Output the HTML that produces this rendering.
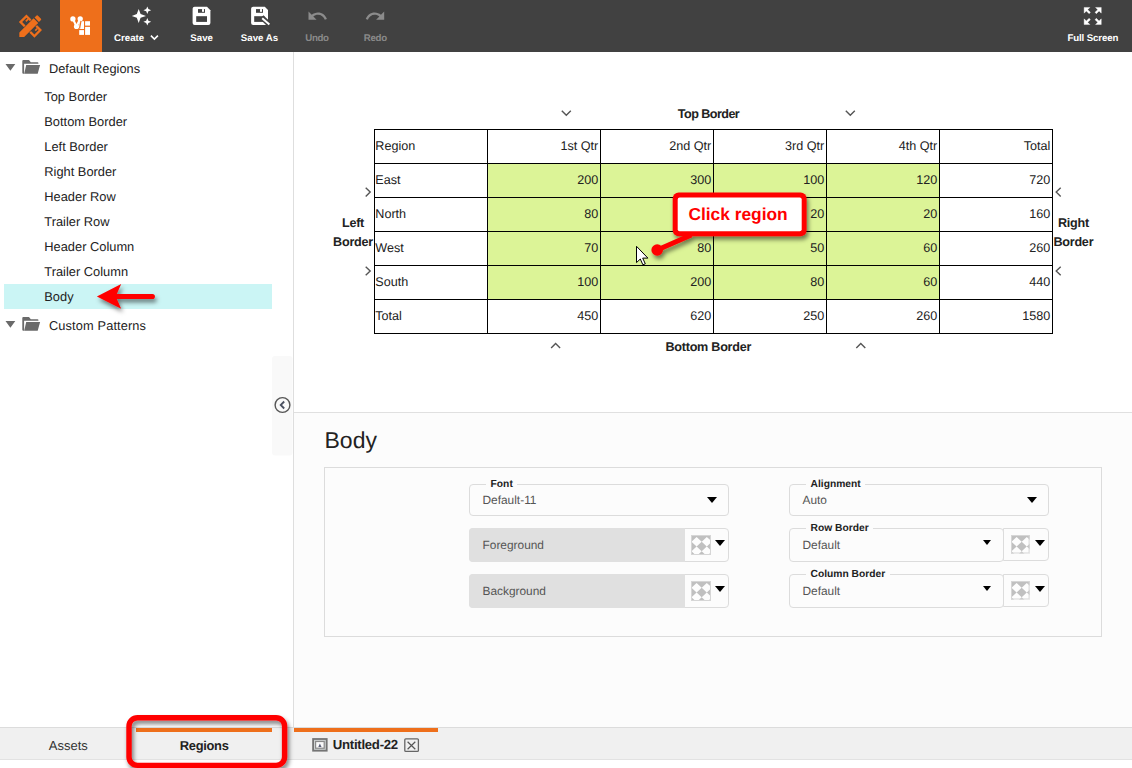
<!DOCTYPE html>
<html lang="en">
<head>
<meta charset="utf-8">
<title>Regions</title>
<style>
*{box-sizing:border-box;margin:0;padding:0}
html,body{width:1132px;height:768px;overflow:hidden;background:#fff;font-family:"Liberation Sans",sans-serif;color:#222;text-rendering:geometricPrecision}
.abs{position:absolute}
#app{position:relative;width:1132px;height:768px;overflow:hidden;background:#fff}
/* toolbar */
#tb{position:absolute;left:0;top:0;width:1132px;height:52px;background:#414141}
#tb .act{position:absolute;left:60px;top:0;width:42px;height:52px;background:#ee6f1b}
.tbl{position:absolute;top:31.5px;height:13px;line-height:13px;font-size:9.7px;font-weight:bold;color:#fff;white-space:nowrap}
.tbl.dis{color:#8a8a8a}
.tbi{position:absolute}
/* left panel */
#lp{position:absolute;left:0;top:52px;width:293px;height:675px;background:#fff}
#lpb{position:absolute;left:293px;top:52px;width:1px;height:675px;background:#dedede}
.tr{position:absolute;left:0;height:25px;line-height:25px;font-size:12.6px;color:#222;white-space:nowrap}
.tr.it{left:44.3px;font-size:12.85px}
.tr.fo{left:49px;font-size:12.8px}
#sel{position:absolute;left:4px;top:284px;width:268px;height:25px;background:#cbf5f5}
.tri{position:absolute;width:0;height:0;border-left:4.9px solid transparent;border-right:4.9px solid transparent;border-top:6.7px solid #6a6a6a}
/* bottom tabs */
#bt{position:absolute;left:0;top:727px;width:1132px;height:33px;background:#f0f0f0;border-top:1px solid #dcdcdc;border-bottom:1px solid #e2e2e2}
.ol{position:absolute;top:728px;height:4px;background:#ee6f1b}
/* table */
#grid{position:absolute;left:374px;top:129px;border-collapse:collapse;table-layout:fixed;font-size:12.6px;color:#222}
#grid td{border:1px solid #000;width:113px;height:34px;padding:0 1.7px 1px 0.3px;text-align:right;vertical-align:middle;white-space:nowrap;overflow:hidden}
#grid td:first-child{text-align:left}
#grid td.g{background:#dcf497}
.bl{position:absolute;font-size:12.6px;letter-spacing:-0.25px;font-weight:bold;color:#222;white-space:nowrap;text-align:center;line-height:19px;transform:translateX(-50%)}
/* props */
#pp{position:absolute;left:294px;top:412px;width:838px;height:315px;background:#fcfcfc;border-top:1px solid #e0e0e0}
#fs{position:absolute;left:324px;top:467px;width:778px;height:170px;border:1px solid #dcdcdc}
.sel{position:absolute;border:1px solid #dcdcdc;border-radius:4px;background:#fcfcfc}
.lab{position:absolute;font-size:10.25px;font-weight:bold;color:#222;background:#fcfcfc;border-radius:3px;padding:0 4.5px;height:13px;line-height:13px;white-space:nowrap;margin:1.3px 0 0 2.1px}
.val{position:absolute;font-size:11.9px;margin:-0.4px 0 0 0.5px;color:#555;white-space:nowrap;height:16px;line-height:16px}
.dn{position:absolute;width:0;height:0;border-left:5px solid transparent;border-right:5px solid transparent;border-top:6px solid #000}
.dn.s{border-left-width:4px;border-right-width:4px;border-top-width:5px}
.gry{position:absolute;background:#e0e0e0;border-radius:4px 0 0 4px}
.sw{position:absolute;width:20px;height:20px}
</style>
</head>
<body>
<div id="app">

<!-- TOOLBAR -->
<div id="tb">
  <div class="act"></div>
  <svg class="tbi" style="left:0;top:0" width="1132" height="52" viewBox="0 0 1132 52">
    <!-- design icon -->
    <g transform="translate(30.44,26.08) rotate(45)" fill="#ee6f1b">
      <path fill-rule="evenodd" d="M-11 -5.35 H11 V5.35 H-11Z M-8.7 -3.05 H8.7 V3.05 H-8.7Z"/>
      <rect x="-7.4" y="-3.2" width="1.7" height="3.1"/>
      <rect x="5.8" y="-3.2" width="1.7" height="3.1"/>
    </g>
    <g transform="translate(30.44,26.08) rotate(-45)" fill="#ee6f1b">
      <path d="M-15.4 0 L-12.3 -3.1 H7.55 V3.1 H-12.3Z" stroke="#414141" stroke-width="1.6" paint-order="stroke"/>
      <path d="M-15.4 0 L-12.3 -3.1 H7.55 V3.1 H-12.3Z"/>
      <path d="M8.9 -3.1 H11.8 a0.8 0.8 0 0 1 0.8 0.8 V2.3 a0.8 0.8 0 0 1 -0.8 0.8 H8.9Z"/>
    </g>
    <!-- regions icon -->
    <g fill="#fff" stroke="none">
      <circle cx="72.9" cy="18.9" r="2.65"/><circle cx="80.2" cy="18.8" r="2.65"/><circle cx="76.5" cy="26.5" r="2.6"/>
      <path d="M72.9 18.9 L76.5 26.5 L80.2 18.8" fill="none" stroke="#fff" stroke-width="2.1" stroke-linejoin="round"/>
      <rect x="79.2" y="21.2" width="4.8" height="7.8"/>
      <rect x="85.1" y="21.2" width="4.9" height="4.4"/>
      <rect x="79.2" y="30.1" width="4.8" height="4.8"/>
      <rect x="85.1" y="26.9" width="4.9" height="8"/>
    </g>
    <path d="M81 20.9 L79.55 28.6" fill="none" stroke="#ee6f1b" stroke-width="1.15"/>
    <!-- create sparkle -->
    <g fill="#fff">
      <path d="M138.7 9 L140.6 14 L146 15.9 L140.6 17.8 L138.7 22.9 L136.8 17.8 L131.8 15.9 L136.8 14Z"/>
      <path d="M147.3 6.4 L148.4 9.1 L151.2 10.2 L148.4 11.3 L147.3 14 L146.2 11.3 L143.4 10.2 L146.2 9.1Z"/>
      <path d="M147.3 18 L148.4 20.7 L151.2 21.8 L148.4 22.9 L147.3 25.6 L146.2 22.9 L143.4 21.8 L146.2 20.7Z"/>
    </g>
    <path d="M150.9 35.6 L154.4 39.1 L157.9 35.6" fill="none" stroke="#fff" stroke-width="1.6"/>
    <!-- save -->
    <g id="flop">
      <path fill="#fff" d="M194.6 6.8 H207 L210.4 10.2 V23.1 a2 2 0 0 1 -2 2 H194.6 a2 2 0 0 1 -2 -2 V8.8 a2 2 0 0 1 2 -2Z"/>
      <rect x="198" y="9.1" width="7" height="3.7" fill="#414141"/>
      <rect x="202" y="9.1" width="2" height="2.7" fill="#fff"/>
      <rect x="196.2" y="16.2" width="10.8" height="5.7" fill="#414141"/>
    </g>
    <!-- save as -->
    <g>
      <path fill="#fff" d="M253.1 6.8 H264.8 L268 10 V23.1 a2 2 0 0 1 -2 2 H253.1 a2 2 0 0 1 -2 -2 V8.8 a2 2 0 0 1 2 -2Z"/>
      <rect x="256" y="9.1" width="7" height="3.7" fill="#414141"/>
      <rect x="260" y="9.1" width="2" height="2.7" fill="#fff"/>
      <rect x="254.2" y="16.2" width="10.2" height="5.7" fill="#414141"/>
      <path d="M261.6 17.2 L270.2 25.4" stroke="#414141" stroke-width="5.2" fill="none"/>
      <path d="M262.2 18.2 L269.4 24.6" stroke="#fff" stroke-width="2" fill="none"/>
    </g>
    <!-- undo / redo -->
    <path transform="translate(306.7,5.3) scale(0.9)" fill="#8c8c8c" d="M12.5 8c-2.65 0-5.05.99-6.9 2.6L2 7v9h9l-3.62-3.62c1.39-1.16 3.16-1.88 5.12-1.88 3.54 0 6.55 2.31 7.6 5.5l2.37-.78C21.08 11.03 17.15 8 12.5 8z"/>
    <path transform="translate(364.4,5.3) scale(0.9)" fill="#8c8c8c" d="M18.4 10.6C16.55 8.99 14.15 8 11.5 8c-4.65 0-8.58 3.03-9.96 7.22L3.9 16c1.05-3.19 4.05-5.5 7.6-5.5 1.95 0 3.73.72 5.12 1.88L13 16h9V7l-3.6 3.6z"/>
    <!-- full screen -->
    <path transform="translate(1081.3,4.6) scale(0.95)" fill="#fff" stroke="#fff" stroke-width="0.4" stroke-linejoin="miter" d="M15 3l2.3 2.3-2.89 2.87 1.42 1.42L18.7 6.7 21 9V3h-6zM3 9l2.3-2.3 2.87 2.89 1.42-1.42L6.7 5.3 9 3H3v6zm6 12l-2.3-2.3 2.89-2.87-1.42-1.42L5.3 17.3 3 15v6h6zm12-6l-2.3 2.3-2.87-2.89-1.42 1.42 2.89 2.87L15 21h6v-6z"/>
  </svg>
  <div class="tbl" style="left:114px">Create</div>
  <div class="tbl" style="left:190.3px">Save</div>
  <div class="tbl" style="left:240.8px">Save As</div>
  <div class="tbl dis" style="left:305.2px;letter-spacing:-0.3px">Undo</div>
  <div class="tbl dis" style="left:363.8px;letter-spacing:-0.3px">Redo</div>
  <div class="tbl" style="left:1067.4px;letter-spacing:-0.12px">Full Screen</div>
</div>

<!-- LEFT PANEL -->
<div id="lp"></div>
<div id="lpb"></div>
<div id="sel"></div>
<svg class="abs" style="left:0;top:56px" width="48" height="20" viewBox="0 56 48 20"><path fill="#6a6a6a" d="M5.5 63.9 H15.3 L10.4 70.7Z M22.3 61 Q22.3 60 23.3 60 H29 L30.8 62.2 H37.6 Q38.4 62.2 38.4 63 V63.7 H24.1 V73.65 H23.3 Q22.3 73.65 22.3 72.65Z M26.2 65 H40.1 L37.7 73.65 H24.2Z"/></svg>
<div class="tr fo" style="top:56px">Default Regions</div>
<div class="tr it" style="top:84.2px">Top Border</div>
<div class="tr it" style="top:109.2px">Bottom Border</div>
<div class="tr it" style="top:134.2px">Left Border</div>
<div class="tr it" style="top:159.2px">Right Border</div>
<div class="tr it" style="top:184.2px">Header Row</div>
<div class="tr it" style="top:209.2px">Trailer Row</div>
<div class="tr it" style="top:234.2px">Header Column</div>
<div class="tr it" style="top:259.2px">Trailer Column</div>
<div class="tr it" style="top:284.2px">Body</div>
<svg class="abs" style="left:0;top:313px" width="48" height="20" viewBox="0 56 48 20"><path fill="#6a6a6a" d="M5.5 63.9 H15.3 L10.4 70.7Z M22.3 61 Q22.3 60 23.3 60 H29 L30.8 62.2 H37.6 Q38.4 62.2 38.4 63 V63.7 H24.1 V73.65 H23.3 Q22.3 73.65 22.3 72.65Z M26.2 65 H40.1 L37.7 73.65 H24.2Z"/></svg>
<div class="tr fo" style="top:313px;letter-spacing:0.12px">Custom Patterns</div>

<!-- TABLE -->
<table id="grid">
<tr><td>Region</td><td>1st Qtr</td><td>2nd Qtr</td><td>3rd Qtr</td><td>4th Qtr</td><td>Total</td></tr>
<tr><td>East</td><td class="g">200</td><td class="g">300</td><td class="g">100</td><td class="g">120</td><td>720</td></tr>
<tr><td>North</td><td class="g">80</td><td class="g"></td><td class="g">20</td><td class="g">20</td><td>160</td></tr>
<tr><td>West</td><td class="g">70</td><td class="g">80</td><td class="g">50</td><td class="g">60</td><td>260</td></tr>
<tr><td>South</td><td class="g">100</td><td class="g">200</td><td class="g">80</td><td class="g">60</td><td>440</td></tr>
<tr><td>Total</td><td>450</td><td>620</td><td>250</td><td>260</td><td>1580</td></tr>
</table>
<div class="bl" style="left:708.5px;top:104.5px;letter-spacing:-0.55px">Top Border</div>
<div class="bl" style="left:708.3px;top:337.6px">Bottom Border</div>
<div class="bl" style="left:353px;top:213.7px">Left<br>Border</div>
<div class="bl" style="left:1073.4px;top:213.7px">Right<br>Border</div>

<!-- PROPS PANEL -->
<div id="pp"></div>
<div class="abs" style="left:324.5px;top:425.3px;font-size:23px;line-height:30px;color:#222">Body</div>
<div id="fs"></div>

<!-- FORM -->
<div class="sel" style="left:469px;top:484px;width:260px;height:32px"></div>
<div class="lab" style="left:484px;top:477px">Font</div>
<div class="val" style="left:482px;top:492px">Default-11</div>
<div class="dn" style="left:707px;top:497px"></div>
<div class="sel" style="left:469px;top:528px;width:260px;height:34px"></div>
<div class="gry" style="left:469px;top:528px;width:216px;height:34px"></div>
<div class="val" style="left:482px;top:537px">Foreground</div>
<svg class="sw" style="left:691px;top:535px;width:20px;height:20px" viewBox="0 0 20 20"><rect x="0" y="0" width="20" height="20" fill="#c0c0c0"/><path d="M0.5 6.7 L5.6 1.9 L10.7 6.7 L5.6 11.5Z M0.5 16.3 L5.6 11.5 L10.7 16.3 L5.6 21.1Z M10.7 6.7 L15.8 1.9 L20.9 6.7 L15.8 11.5Z M10.7 16.3 L15.8 11.5 L20.9 16.3 L15.8 21.1Z" fill="#fdfdfd"/><rect x="0.5" y="0.5" width="19" height="19" fill="none" stroke="#d6d6d6"/></svg>
<div class="dn" style="left:715px;top:540px"></div>
<div class="sel" style="left:469px;top:574px;width:260px;height:34px"></div>
<div class="gry" style="left:469px;top:574px;width:216px;height:34px"></div>
<div class="val" style="left:482px;top:583px">Background</div>
<svg class="sw" style="left:691px;top:581px;width:20px;height:20px" viewBox="0 0 20 20"><rect x="0" y="0" width="20" height="20" fill="#c0c0c0"/><path d="M0.5 6.7 L5.6 1.9 L10.7 6.7 L5.6 11.5Z M0.5 16.3 L5.6 11.5 L10.7 16.3 L5.6 21.1Z M10.7 6.7 L15.8 1.9 L20.9 6.7 L15.8 11.5Z M10.7 16.3 L15.8 11.5 L20.9 16.3 L15.8 21.1Z" fill="#fdfdfd"/><rect x="0.5" y="0.5" width="19" height="19" fill="none" stroke="#d6d6d6"/></svg>
<div class="dn" style="left:715px;top:586px"></div>
<div class="sel" style="left:789px;top:484px;width:260px;height:32px"></div>
<div class="lab" style="left:804px;top:477px">Alignment</div>
<div class="val" style="left:802px;top:492px">Auto</div>
<div class="dn" style="left:1027px;top:497px"></div>
<div class="sel" style="left:1003px;top:528px;width:46px;height:33px;border-radius:0 4px 4px 0"></div>
<div class="sel" style="left:789px;top:528px;width:215px;height:34px"></div>
<div class="lab" style="left:804px;top:521px">Row Border</div>
<div class="val" style="left:802px;top:537px">Default</div>
<div class="dn s" style="left:983px;top:540px"></div>
<svg class="sw" style="left:1011px;top:535px;width:18.6px;height:18.5px" viewBox="0 0 18.6 18.5"><rect x="0" y="0" width="18.6" height="18.5" fill="#c0c0c0"/><path d="M0.5 6.7 L5.6 1.9 L10.7 6.7 L5.6 11.5Z M0.5 16.3 L5.6 11.5 L10.7 16.3 L5.6 21.1Z M10.7 6.7 L15.8 1.9 L20.9 6.7 L15.8 11.5Z M10.7 16.3 L15.8 11.5 L20.9 16.3 L15.8 21.1Z" fill="#fdfdfd"/><rect x="0.5" y="0.5" width="17.6" height="17.5" fill="none" stroke="#d6d6d6"/></svg>
<div class="dn" style="left:1035px;top:540px"></div>
<div class="sel" style="left:1003px;top:574px;width:46px;height:33px;border-radius:0 4px 4px 0"></div>
<div class="sel" style="left:789px;top:574px;width:215px;height:34px"></div>
<div class="lab" style="left:804px;top:567px">Column Border</div>
<div class="val" style="left:802px;top:583px">Default</div>
<div class="dn s" style="left:983px;top:586px"></div>
<svg class="sw" style="left:1011px;top:581px;width:18.6px;height:18.5px" viewBox="0 0 18.6 18.5"><rect x="0" y="0" width="18.6" height="18.5" fill="#c0c0c0"/><path d="M0.5 6.7 L5.6 1.9 L10.7 6.7 L5.6 11.5Z M0.5 16.3 L5.6 11.5 L10.7 16.3 L5.6 21.1Z M10.7 6.7 L15.8 1.9 L20.9 6.7 L15.8 11.5Z M10.7 16.3 L15.8 11.5 L20.9 16.3 L15.8 21.1Z" fill="#fdfdfd"/><rect x="0.5" y="0.5" width="17.6" height="17.5" fill="none" stroke="#d6d6d6"/></svg>
<div class="dn" style="left:1035px;top:586px"></div>

<!-- BOTTOM TABS -->
<div id="bt"></div>
<div class="ol" style="left:136px;width:136px"></div>
<div class="ol" style="left:294px;width:144px"></div>
<div class="abs" style="left:48.8px;top:737.7px;font-size:13px;line-height:16px;color:#333">Assets</div>
<div class="abs" style="left:204.2px;top:737.6px;font-size:12.9px;letter-spacing:-0.3px;line-height:16px;font-weight:bold;color:#222;transform:translateX(-50%)">Regions</div>
<div class="abs" style="left:332.8px;top:736.9px;font-size:13.2px;letter-spacing:-0.28px;line-height:16px;font-weight:bold;color:#222">Untitled-22</div>

<!-- OVERLAY -->
<svg class="abs" style="left:0;top:0;pointer-events:none" width="1132" height="768" viewBox="0 0 1132 768">
  <defs>
    <filter id="ds" x="-20%" y="-30%" width="150%" height="190%"><feDropShadow dx="1.8" dy="3.4" stdDeviation="2.3" flood-color="#000" flood-opacity="0.5"/></filter>
  </defs>
  <!-- chevrons -->
  <g fill="none" stroke="#555" stroke-width="1.4">
    <path d="M561.8 110.8 L566.3 115.3 L570.8 110.8"/>
    <path d="M845.8 110.8 L850.3 115.3 L854.8 110.8"/>
    <path d="M551.1 348 L555.6 343.5 L560.1 348"/>
    <path d="M856.3 348 L860.8 343.5 L865.3 348"/>
    <path d="M365.7 187.8 L370.2 192.1 L365.7 196.4"/>
    <path d="M365.7 266.7 L370.2 271 L365.7 275.3"/>
    <path d="M1060.7 187.8 L1056.2 192.1 L1060.7 196.4"/>
    <path d="M1060.7 266.7 L1056.2 271 L1060.7 275.3"/>
  </g>
  <!-- collapse handle -->
  <rect x="272" y="356" width="20.5" height="99.5" rx="3" fill="#f9f9f9"/>
  <circle cx="282.5" cy="405" r="7.4" fill="none" stroke="#555" stroke-width="1.4"/>
  <path d="M284.2 401.5 L280.7 405 L284.2 408.5" fill="none" stroke="#4a5060" stroke-width="1.8"/>
  <!-- tree arrow -->
  <path d="M96.9 296.5 L121.2 284.1 L116.8 293.95 H152.4 a2.55 2.55 0 0 1 0 5.1 H116.8 L121.2 308.8Z" fill="#ff0000" filter="url(#ds)"/>
  <!-- callout -->
  <g filter="url(#ds)">
    <path d="M656.2 247.7 L690.3 232.7 L692.3 237.3 L658.2 252.3Z" fill="#ff0000"/>
    <circle cx="657.2" cy="250" r="5.8" fill="#ff0000"/>
    <rect x="672.7" y="192.4" width="133.9" height="43.8" rx="6" fill="#ff0000"/>
  </g>
  <rect x="677.7" y="197.4" width="124" height="33.9" rx="2" fill="#fff"/>
  <text x="688.4" y="220.3" font-family="Liberation Sans, sans-serif" font-weight="bold" font-size="17.35" fill="#ff0000">Click region</text>
  <!-- cursor -->
  <path d="M636.5 246.3 V262.6 L640.3 259 L642.9 264.8 L645.3 263.8 L642.7 258.1 L647.9 258.1Z" fill="#fff" stroke="#000" stroke-width="1" stroke-linejoin="miter"/>
  <!-- tab icons -->
  <g>
    <rect x="312.2" y="738.1" width="15.4" height="13.5" fill="#747474"/>
    <rect x="314" y="739.9" width="11.8" height="9.9" fill="#cdd1d1"/>
    <rect x="315" y="740.9" width="9.8" height="7.9" fill="#8a8a8a"/>
    <rect x="316.2" y="742.1" width="7.4" height="5.5" fill="#fafafa"/>
    <path d="M318.3 746.9 L319.9 743.5 L321.5 746.9Z" fill="#5a5f78"/>
    <rect x="404.8" y="738.8" width="13.6" height="12.6" rx="1" fill="none" stroke="#666" stroke-width="1.3"/>
    <path d="M407.6 741.8 L415.3 749.3 M415.3 741.8 L407.6 749.3" stroke="#555" stroke-width="1.2" fill="none"/>
  </g>
  <!-- red highlight -->
  <rect x="129" y="717.7" width="155.6" height="47.7" rx="8.5" fill="none" stroke="#ff0000" stroke-width="5.4" filter="url(#ds)"/>
</svg>

</div>
</body>
</html>
